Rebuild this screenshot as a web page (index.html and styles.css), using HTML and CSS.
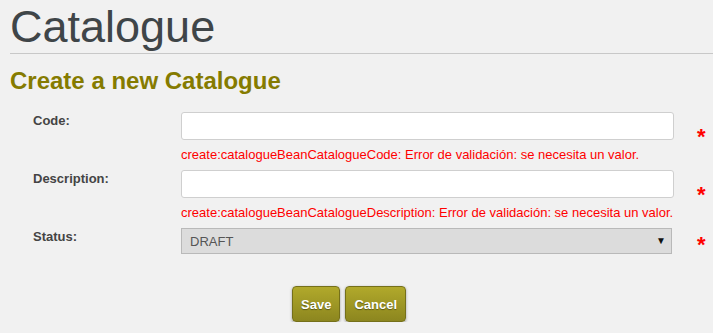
FILE: index.html
```
<!DOCTYPE html>
<html lang="en">
<head>
    <meta charset="utf-8">
    <title>Catalogue</title>
    <link rel="stylesheet" href="styles.css">
</head>
<body>

<!-- Page Title -->
<h1 class="page-title">Catalogue</h1>

<!-- Create Form -->
<h2 class="form-title">Create a new Catalogue</h2>

<form class="edit-form">
    <label class="field-label" for="code">Code:</label>
    <div class="field">
        <input id="code" class="text-input" type="text">
        <div class="field-error">create:catalogueBeanCatalogueCode: Error de validación: se necesita un valor.</div>
    </div>
    <span class="required">*</span>

    <label class="field-label" for="description">Description:</label>
    <div class="field">
        <input id="description" class="text-input" type="text">
        <div class="field-error">create:catalogueBeanCatalogueDescription: Error de validación: se necesita un valor.</div>
    </div>
    <span class="required">*</span>

    <label class="field-label" for="status">Status:</label>
    <div class="field">
        <div class="select-wrap">
            <select id="status" class="select-input">
                <option>DRAFT</option>
                <option>ACTIVE</option>
            </select>
        </div>
    </div>
    <span class="required required-plain">*</span>

    <div class="form-buttons">
        <button type="button" class="btn">Save</button>
        <button type="button" class="btn">Cancel</button>
    </div>
</form>

</body>
</html>
```

FILE: styles.css
```
/* General Layout */
body {
    background-color: #f1f1f1;
    color: #444;
    font-family: 'Liberation Sans', Arial, sans-serif;
    margin: 0;
    padding: 0 0 0 10px;
}

/* Title */
.page-title {
    margin: 0;
    font-size: 45px;
    font-weight: normal;
    color: #3f4548;
    border-bottom: 1px solid #c8c8c8;
    height: 53px;
    line-height: 53px;
}

.form-title {
    margin: 13px 0 17px 0;
    font-size: 24px;
    font-weight: bold;
    color: #857b00;
}

/* Form Grid */
.edit-form {
    display: grid;
    grid-template-columns: 148px 493px 1fr;
    padding-left: 23px;
}

.field-label {
    font-size: 13px;
    font-weight: bold;
    color: #444;
    padding-top: 1px;
}

.field {
    display: flex;
    flex-direction: column;
}

.text-input {
    box-sizing: border-box;
    height: 28px;
    width: 100%;
    margin: 0;
    border: 1px solid #cfcfcf;
    border-radius: 3px;
    background: #fff;
    font-family: inherit;
    font-size: 13px;
}

.field-error {
    color: #f00;
    font-size: 13px;
    padding: 7px 0 8px 0;
}

/* Select */
.select-wrap {
    position: relative;
    width: 491px;
}

.select-wrap::after {
    content: "\25BC";
    position: absolute;
    right: 6px;
    top: 7px;
    font-size: 10px;
    color: #111;
    pointer-events: none;
}

.select-input {
    appearance: none;
    -webkit-appearance: none;
    box-sizing: border-box;
    width: 100%;
    height: 26px;
    margin: 0;
    padding: 0 8px;
    border: 1px solid #b9b9b9;
    border-radius: 0;
    background: #dcdcdc;
    color: #555;
    font-family: inherit;
    font-size: 13px;
}

.required {
    align-self: start;
    margin-top: 14px;
    padding-left: 23px;
    color: #f00;
    font-size: 22px;
    font-weight: bold;
    line-height: 1;
}

.required-plain {
    margin-top: 6px;
}

/* Buttons */
.form-buttons {
    grid-column: 1 / 4;
    display: flex;
    gap: 5px;
    padding: 30px 0 0 259px;
}

.btn {
    height: 36px;
    padding: 0 8px;
    border: 1px solid #75701a;
    border-radius: 4px;
    background: linear-gradient(#b1a92b, #8c861f);
    box-shadow: 0 1px 3px rgba(0, 0, 0, 0.35);
    color: #fff;
    font-family: inherit;
    font-size: 13px;
    font-weight: bold;
    text-shadow: 0 1px 1px rgba(0, 0, 0, 0.4);
    cursor: pointer;
}
```
